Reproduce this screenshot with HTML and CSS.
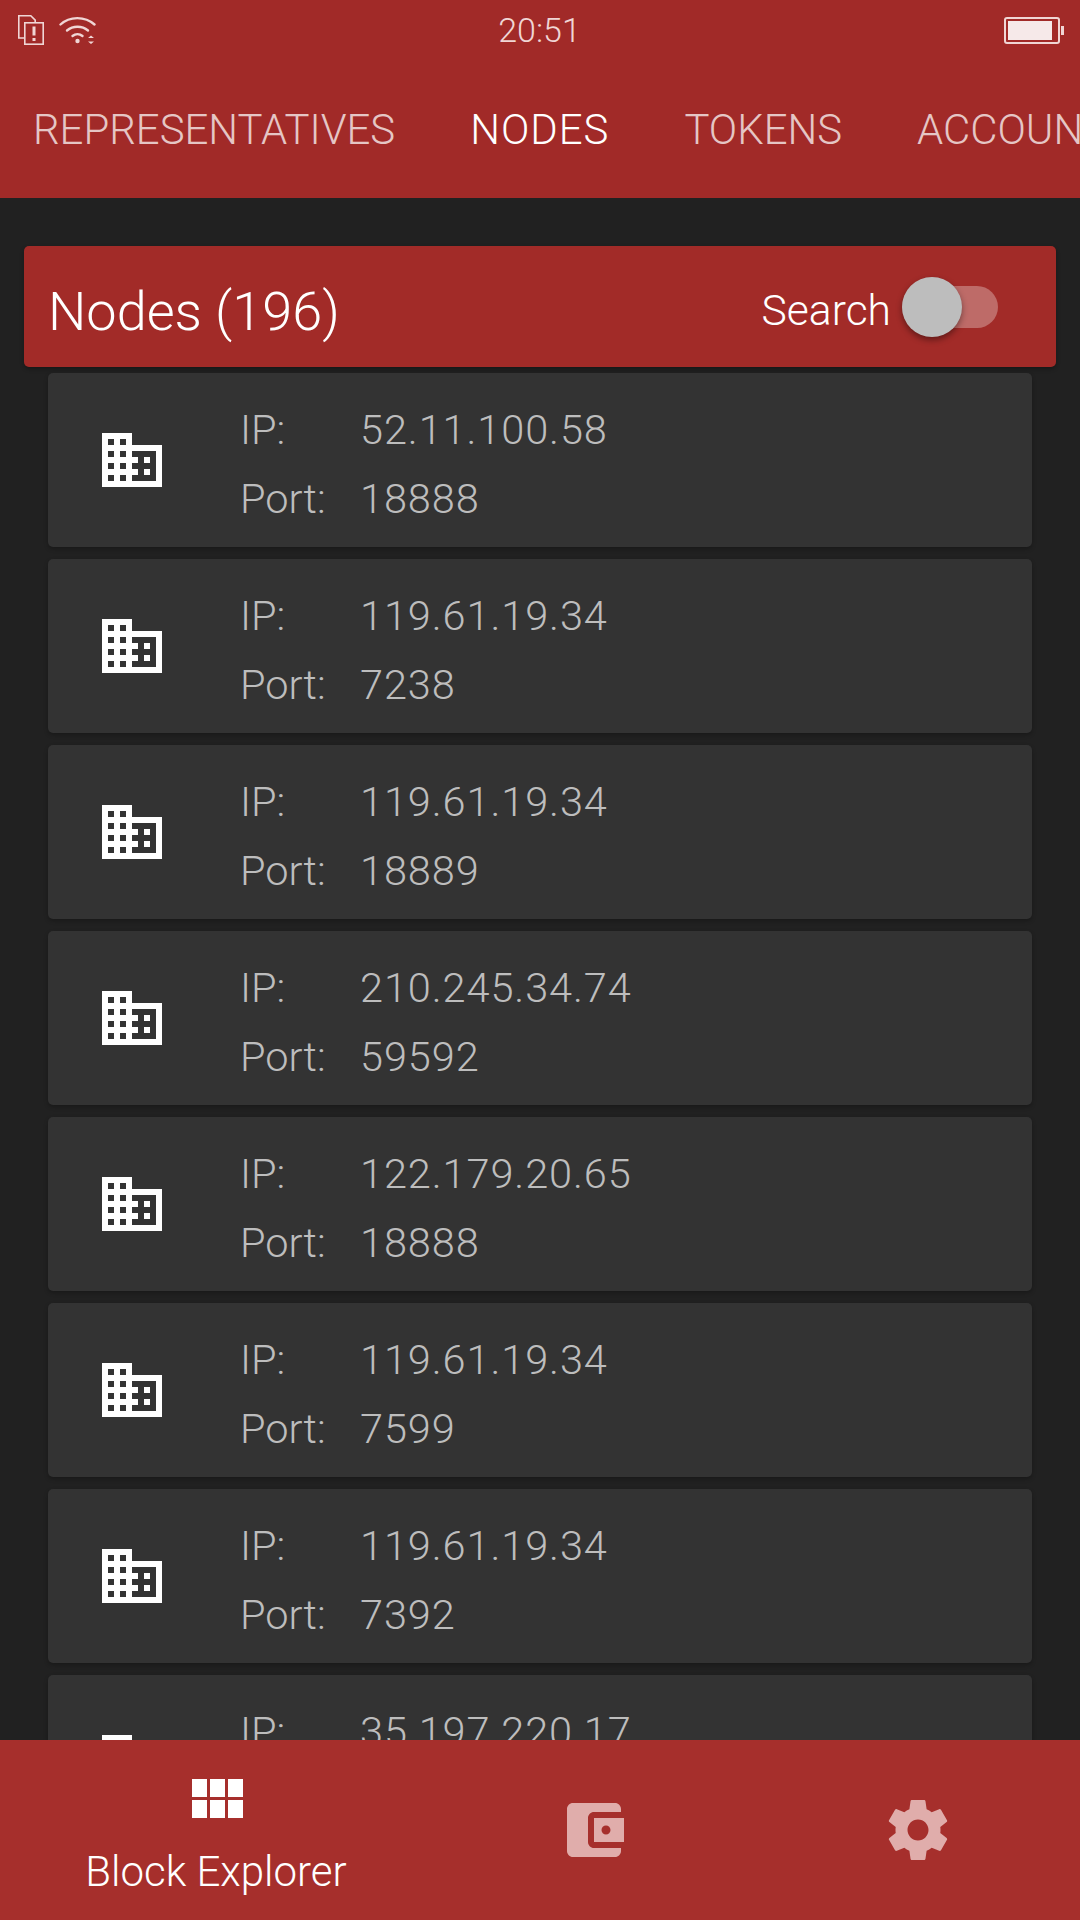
FILE: index.html
```html
<!DOCTYPE html>
<html lang="en">
<head>
    <meta charset="UTF-8">
    <meta name="viewport" content="width=device-width, initial-scale=1.0">
    <title>Block Explorer</title>
    <link rel="stylesheet" href="styles.css">
</head>
<body>
    <svg class="sprites" aria-hidden="true">
        <symbol id="domain" viewBox="0 0 24 24">
            <path d="M12 7V3H2v18h20V7H12zM6 19H4v-2h2v2zm0-4H4v-2h2v2zm0-4H4V9h2v2zm0-4H4V5h2v2zm4 12H8v-2h2v2zm0-4H8v-2h2v2zm0-4H8V9h2v2zm0-4H8V5h2v2zm10 12h-8v-2h2v-2h-2v-2h2v-2h-2V9h8v10zm-2-8h-2v2h2v-2zm0 4h-2v2h2v-2z"/>
        </symbol>
    </svg>

    <header class="app-bar">
        <div class="status-bar">
            <div class="status-left">
                <svg class="sim-icon" viewBox="0 0 26 30" fill="none" stroke="currentColor" stroke-width="1.6">
                    <path d="M6 23H.8V.8h12l4.4 4.4V7"/>
                    <rect x="6.8" y="7.8" width="18.4" height="21.4"/>
                    <path d="M16 11.5v9" stroke-width="3"/>
                    <path d="M16 23v3" stroke-width="3"/>
                </svg>
                <svg class="wifi-icon" viewBox="0 0 38 30" fill="none" stroke="currentColor" stroke-width="2.4" stroke-linecap="round">
                    <path d="M1.5 9.5C10.500 1 26 1 35.500 9.500"/>
                    <path d="M8 15.500c6-5 15-5 21 0"/>
                    <path d="M13.500 21c3-2.500 7-2.500 10 0"/>
                    <circle cx="18.500" cy="26" r="2.200" fill="currentColor" stroke="none"/>
                    <path d="M29 23l3-2.600 3 2.600zM29 26.500l3 2.600 3-2.600z" fill="currentColor" stroke="none"/>
                </svg>
            </div>
            <span class="clock">20:51</span>
            <div class="battery">
                <div class="battery-body"><div class="battery-level"></div></div>
                <div class="battery-cap"></div>
            </div>
        </div>
        <nav class="tabs">
            <span class="tab">REPRESENTATIVES</span>
            <span class="tab active">NODES</span>
            <span class="tab">TOKENS</span>
            <span class="tab">ACCOUNTS</span>
        </nav>
    </header>

    <main class="content">
        <section class="panel-head">
            <h1>Nodes (196)</h1>
            <label class="search-toggle">
                <span class="search-label">Search</span>
                <span class="switch"><span class="switch-thumb"></span></span>
            </label>
        </section>

        <ul class="node-list">
            <li class="node">
                <svg class="node-icon"><use href="#domain"/></svg>
                <dl class="node-info"><dt>IP:</dt><dd>52.11.100.58</dd><dt>Port:</dt><dd>18888</dd></dl>
            </li>
            <li class="node">
                <svg class="node-icon"><use href="#domain"/></svg>
                <dl class="node-info"><dt>IP:</dt><dd>119.61.19.34</dd><dt>Port:</dt><dd>7238</dd></dl>
            </li>
            <li class="node">
                <svg class="node-icon"><use href="#domain"/></svg>
                <dl class="node-info"><dt>IP:</dt><dd>119.61.19.34</dd><dt>Port:</dt><dd>18889</dd></dl>
            </li>
            <li class="node">
                <svg class="node-icon"><use href="#domain"/></svg>
                <dl class="node-info"><dt>IP:</dt><dd>210.245.34.74</dd><dt>Port:</dt><dd>59592</dd></dl>
            </li>
            <li class="node">
                <svg class="node-icon"><use href="#domain"/></svg>
                <dl class="node-info"><dt>IP:</dt><dd>122.179.20.65</dd><dt>Port:</dt><dd>18888</dd></dl>
            </li>
            <li class="node">
                <svg class="node-icon"><use href="#domain"/></svg>
                <dl class="node-info"><dt>IP:</dt><dd>119.61.19.34</dd><dt>Port:</dt><dd>7599</dd></dl>
            </li>
            <li class="node">
                <svg class="node-icon"><use href="#domain"/></svg>
                <dl class="node-info"><dt>IP:</dt><dd>119.61.19.34</dd><dt>Port:</dt><dd>7392</dd></dl>
            </li>
            <li class="node">
                <svg class="node-icon"><use href="#domain"/></svg>
                <dl class="node-info"><dt>IP:</dt><dd>35.197.220.17</dd><dt>Port:</dt><dd></dd></dl>
            </li>
        </ul>
    </main>

    <footer class="bottom-nav">
        <div class="nav-item active">
            <svg class="grid-icon" viewBox="0 0 51 39" fill="currentColor">
                <rect x="0" y="0" width="15" height="18"/>
                <rect x="18" y="0" width="15" height="18"/>
                <rect x="36" y="0" width="15" height="18"/>
                <rect x="0" y="21" width="15" height="18"/>
                <rect x="18" y="21" width="15" height="18"/>
                <rect x="36" y="21" width="15" height="18"/>
            </svg>
            <span class="nav-label">Block Explorer</span>
        </div>
        <div class="nav-item">
            <svg class="nav-icon" viewBox="0 0 24 24" fill="currentColor">
                <path d="M21 18v1c0 1.100-.9 2-2 2H5c-1.110 0-2-.9-2-2V5c0-1.100.89-2 2-2h14c1.100 0 2 .9 2 2v1h-9c-1.110 0-2 .9-2 2v8c0 1.100.89 2 2 2h9zm-9-2h10V8H12v8zm4-2.500c-.83 0-1.500-.67-1.500-1.500s.67-1.500 1.500-1.500 1.500.67 1.500 1.500-.67 1.500-1.500 1.500z"/>
            </svg>
        </div>
        <div class="nav-item">
            <svg class="nav-icon" viewBox="0 0 24 24" fill="currentColor">
                <path d="M19.430 12.980c.04-.32.07-.64.07-.98s-.03-.66-.07-.98l2.110-1.650c.19-.15.24-.42.12-.64l-2-3.460c-.12-.22-.39-.3-.61-.22l-2.490 1c-.52-.4-1.080-.73-1.690-.98l-.38-2.650C14.460 2.180 14.250 2 14 2h-4c-.25 0-.46.18-.49.42l-.38 2.650c-.61.25-1.170.59-1.690.98l-2.490-1c-.23-.09-.49 0-.61.22l-2 3.460c-.13.22-.07.49.12.64l2.110 1.650c-.04.32-.07.65-.07.98s.03.66.07.98l-2.110 1.650c-.19.15-.24.42-.12.64l2 3.460c.12.22.39.3.61.22l2.490-1c.52.4 1.080.73 1.690.98l.38 2.650c.03.24.24.42.49.42h4c.25 0 .46-.18.49-.42l.38-2.650c.61-.25 1.170-.59 1.690-.98l2.490 1c.23.09.49 0 .61-.22l2-3.460c.12-.22.07-.49-.12-.64l-2.110-1.650zM12 15.500c-1.930 0-3.500-1.570-3.500-3.500s1.570-3.500 3.500-3.500 3.500 1.570 3.500 3.500-1.570 3.500-3.500 3.500z"/>
            </svg>
        </div>
    </footer>
</body>
</html>
```

FILE: styles.css
```css
/* General */
html, body {
    height: 100%;
}
body {
    margin: 0;
    display: flex;
    flex-direction: column;
    height: 1920px;
    overflow: hidden;
    background-color: #212121;
    color: #fff;
    font-family: Roboto, "Liberation Sans", sans-serif;
    font-weight: 300;
}
.sprites {
    display: none;
}
/* Top bar */
.app-bar {
    flex: none;
    height: 198px;
    background-color: #a12a28;
    overflow: hidden;
}
.status-bar {
    display: flex;
    align-items: center;
    height: 60px;
    padding: 0 16px 0 18px;
    color: #f0d6d5;
}
.status-left {
    flex: 1;
    display: flex;
    align-items: center;
    gap: 15px;
}
.sim-icon {
    width: 26px;
    height: 30px;
}
.wifi-icon {
    width: 38px;
    height: 30px;
}
.clock {
    margin-right: 3px;
    font-size: 34px;
}
.battery {
    flex: 1;
    display: flex;
    align-items: center;
    justify-content: flex-end;
    gap: 1px;
}
.battery-body {
    box-sizing: border-box;
    width: 56px;
    height: 27px;
    padding: 2px 6px 2px 2px;
    border: 2px solid #f0d6d5;
    border-radius: 3px;
}
.battery-level {
    height: 100%;
    background-color: #f6e9e9;
}
.battery-cap {
    width: 3px;
    height: 9px;
    background-color: #f0d6d5;
}
/* Tabs */
.tabs {
    display: flex;
    align-items: center;
    gap: 75px;
    height: 138px;
    padding: 0 0 0 33px;
    box-sizing: border-box;
    white-space: nowrap;
}
.tab {
    font-size: 41.9px;
    color: #e5c6c5;
}
.tab.active {
    color: #fff;
    letter-spacing: 1px;
}
/* Node list */
.content {
    flex: 1;
    min-height: 0;
    overflow: hidden;
    padding: 48px 24px 0;
}
.panel-head {
    display: flex;
    align-items: center;
    justify-content: space-between;
    height: 121px;
    padding: 0 58px 0 24px;
    border-radius: 5px;
    background-color: #a22b28;
    box-shadow: 0 2px 4px rgba(0, 0, 0, 0.3);
}
.panel-head h1 {
    margin: 0;
    padding-top: 10px;
    font-size: 54px;
    font-weight: 300;
}
.search-toggle {
    display: flex;
    align-items: center;
    gap: 11px;
    font-size: 42.6px;
}
.search-label {
    padding-top: 6px;
}
.switch {
    position: relative;
    display: block;
    width: 96px;
    height: 42px;
    border-radius: 21px;
    background-color: rgba(255, 255, 255, 0.3);
}
.switch-thumb {
    position: absolute;
    left: 0;
    top: -9px;
    width: 60px;
    height: 60px;
    border-radius: 50%;
    background-color: #bdbdbd;
    box-shadow: 0 3px 6px rgba(0, 0, 0, 0.4);
}
.node-list {
    list-style: none;
    margin: 6px 24px 0;
    padding: 0;
    display: flex;
    flex-direction: column;
    gap: 12px;
}
.node {
    flex: none;
    display: flex;
    align-items: center;
    height: 174px;
    padding-left: 48px;
    border-radius: 5px;
    background-color: #333;
    box-shadow: 0 2px 4px rgba(0, 0, 0, 0.25);
}
.node-icon {
    flex: none;
    width: 72px;
    height: 72px;
    fill: #fff;
}
.node-info {
    display: grid;
    grid-template-columns: 120px auto;
    grid-auto-rows: 69px;
    align-items: center;
    margin: 0 0 0 72px;
    padding-top: 8px;
    font-size: 41.5px;
    color: #bdbdbd;
}
.node-info dd {
    margin: 0;
    letter-spacing: 0.9px;
}
/* Bottom navigation */
.bottom-nav {
    flex: none;
    display: flex;
    height: 180px;
    background-color: #a62f2c;
    color: #e0adab;
}
.nav-item {
    flex: 3;
    display: flex;
    flex-direction: column;
    align-items: center;
    justify-content: center;
}
.nav-item.active {
    flex: 4;
    justify-content: flex-start;
    padding-top: 39px;
    color: #fff;
}
.grid-icon {
    width: 51px;
    height: 39px;
    margin-left: 2px;
}
.nav-icon {
    width: 72px;
    height: 72px;
}
.nav-label {
    margin-top: 29px;
    font-size: 42px;
}
```
